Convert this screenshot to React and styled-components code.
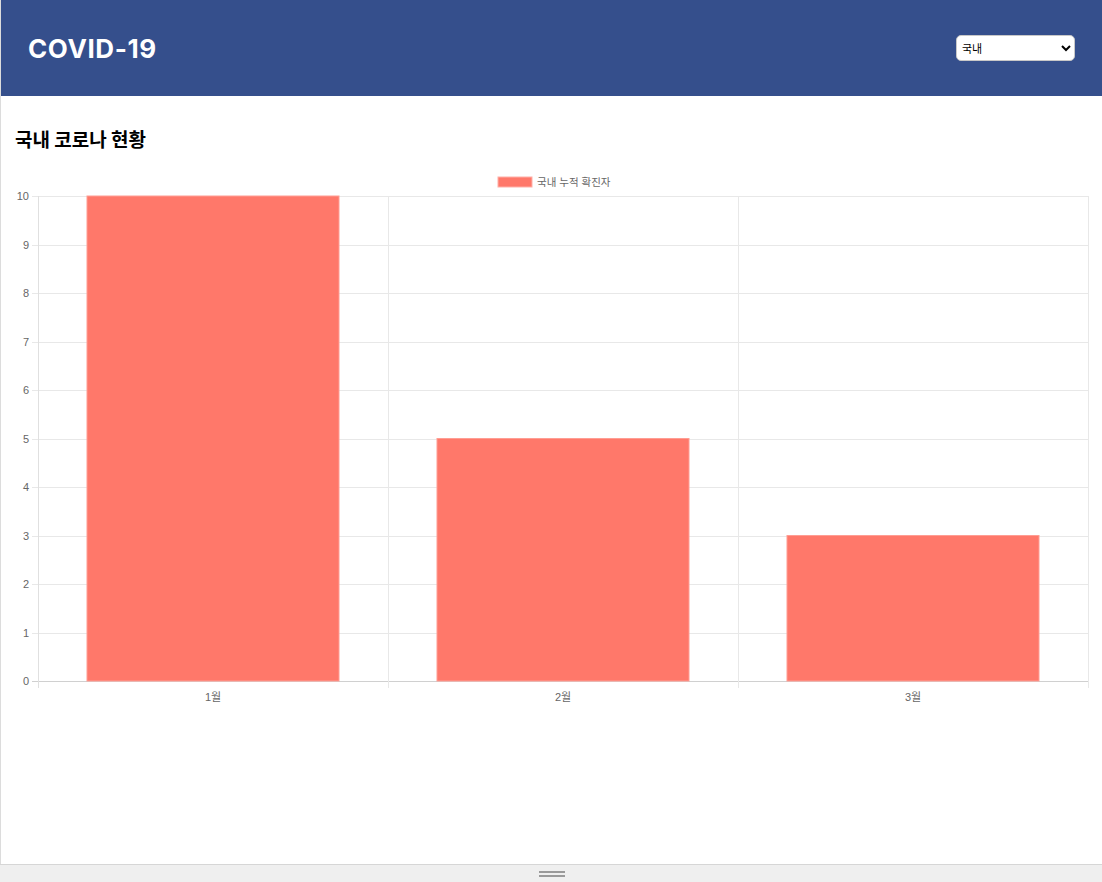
import React from "react";
import styled, { createGlobalStyle } from "styled-components";

const Global = createGlobalStyle`
  html, body { margin: 0; padding: 0; background: #fff; }
  body { font-family: Inter, "Noto Sans CJK KR", sans-serif; overflow: hidden; }
`;

const Frame = styled.div`
  height: 864px;
  border-left: 1px solid #dcdcdc;
  box-sizing: border-box;
  display: flex;
  flex-direction: column;
`;

const Header = styled.header`
  height: 96px;
  background: #354f8c;
  display: flex;
  align-items: center;
  justify-content: space-between;
  padding: 0 27px 0 27px;
  box-sizing: border-box;
`;

const Title = styled.h1`
  margin: 0;
  color: #fff;
  font-family: Inter, "Noto Sans CJK KR", sans-serif;
  font-size: 26px;
  font-weight: 700;
  letter-spacing: 0.6px;
  margin-top: 1px;
`;

const Select = styled.select`
  width: 119px;
  height: 26px;
  border-radius: 5px;
  border: 1px solid #c8c8c8;
  background: #fff;
  font-size: 11px;
  font-family: "Noto Sans CJK KR", sans-serif;
  color: #000;
  padding: 0 1px;
`;

const Main = styled.main`
  flex: 1;
  display: flex;
  flex-direction: column;
`;

const Heading = styled.h2`
  margin: 31px 0 0 14px;
  font-family: "Noto Sans CJK KR", sans-serif;
  font-size: 19px;
  line-height: 24px;
  font-weight: 700;
  color: #000;
`;

const ChartWrap = styled.div`
  margin-top: 19px;
  height: 550px;
`;

const ResizeBar = styled.div`
  height: 18px;
  background: #efefef;
  border-top: 1px solid #d6d6d6;
  box-sizing: border-box;
  display: flex;
  flex-direction: column;
  align-items: center;
  justify-content: center;
  gap: 2px;
  padding-left: 2px;
`;

const Grip = styled.span`
  display: block;
  width: 26px;
  height: 2px;
  background: #9a9a9a;
`;

const data = [
  { label: "1월", value: 10 },
  { label: "2월", value: 5 },
  { label: "3월", value: 3 },
];

function Chart() {
  // coordinates: page x - 1, page y - 170
  const left = 37;
  const right = 1087;
  const top = 26;
  const bottom = 511;
  const step = (bottom - top) / 10;
  const catW = (right - left) / data.length;
  const barW = catW * 0.72;
  const font = '"Liberation Sans", "Noto Sans CJK KR", sans-serif';
  const bar = "#ff786a";
  return (
    <svg width="1101" height="550" viewBox="0 0 1101 550">
      <rect x={497} y={7} width={34} height={10} fill={bar} stroke="#ffb0a8" strokeWidth="1" />
      <text x={536} y={16} fontSize="10.5" fill="#666" fontFamily={font}>국내 누적 확진자</text>
      {Array.from({ length: 11 }).map((_, i) => {
        const y = top + i * step;
        return (
          <g key={i}>
            <line x1={31} x2={right} y1={Math.round(y) + 0.5} y2={Math.round(y) + 0.5} stroke={i === 10 ? "#d0d0d0" : "#e8e8e8"} strokeWidth="1" />
            <text x={28} y={Math.round(y) + 4} fontSize="11" fill="#666" textAnchor="end" fontFamily={font}>{10 - i}</text>
          </g>
        );
      })}
      {[0, 1, 2, 3].map((i) => {
        const x = Math.round(left + i * catW) + 0.5;
        return <line key={i} x1={x} x2={x} y1={top} y2={bottom + 7} stroke={i === 0 ? "#e0e0e0" : "#e8e8e8"} strokeWidth="1" />;
      })}
      {data.map((d, i) => {
        const cx = left + i * catW + catW / 2;
        const h = d.value * step;
        return (
          <g key={d.label}>
            <rect x={cx - barW / 2} y={bottom - h} width={barW} height={h} fill={bar} stroke="#ff9d93" strokeWidth="1" />
            <text x={cx} y={531} fontSize="11" fill="#666" textAnchor="middle" fontFamily={font}>{d.label}</text>
          </g>
        );
      })}
    </svg>
  );
}

export default function App() {
  return (
    <>
      <Global />
      <Frame>
        <Header>
          <Title>COVID-19</Title>
          <Select defaultValue="domestic">
            <option value="domestic">국내</option>
            <option value="world">세계</option>
          </Select>
        </Header>
        <Main>
          <Heading>국내 코로나 현황</Heading>
          <ChartWrap>
            <Chart />
          </ChartWrap>
        </Main>
      </Frame>
      <ResizeBar>
        <Grip />
        <Grip />
      </ResizeBar>
    </>
  );
}
